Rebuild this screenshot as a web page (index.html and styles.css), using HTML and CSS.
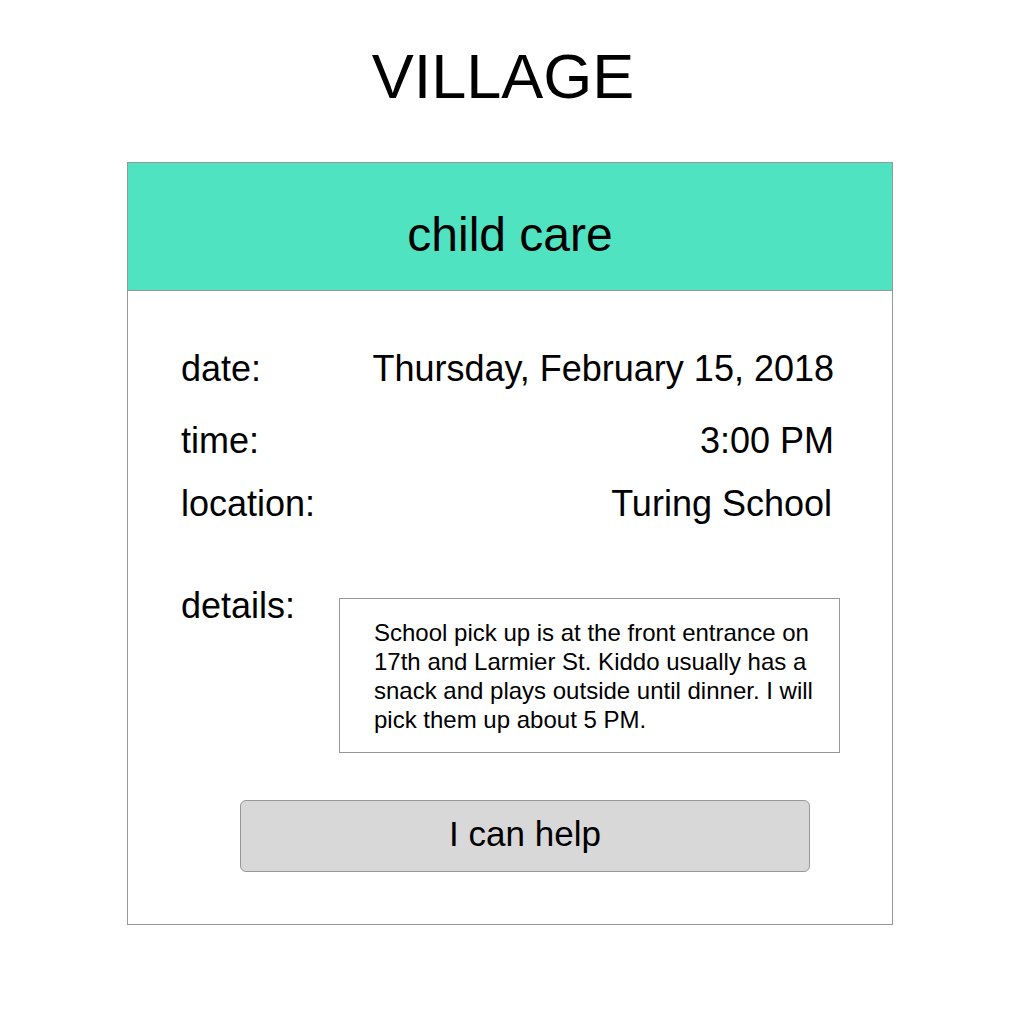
FILE: index.html
```html
<!DOCTYPE html>
<html lang="en">
<head>
<meta charset="utf-8">
<title>Village</title>
<link rel="stylesheet" href="styles.css">
</head>
<body>
  <header class="site-header">
    <h1 class="site-title">VILLAGE</h1>
  </header>
  <main class="card">
    <div class="card-head">
      <h2 class="card-title">child care</h2>
    </div>
    <div class="card-body">
      <div class="row row-date">
        <span class="label">date:</span>
        <span class="value">Thursday, February 15, 2018</span>
      </div>
      <div class="row row-time">
        <span class="label">time:</span>
        <span class="value">3:00 PM</span>
      </div>
      <div class="row row-location">
        <span class="label">location:</span>
        <span class="value value-location">Turing School</span>
      </div>
      <div class="details-row">
        <span class="label details-label">details:</span>
        <div class="details-box">School pick up is at the front entrance on 17th and Larmier St. Kiddo usually has a snack and plays outside until dinner. I will pick them up about 5 PM.</div>
      </div>
      <button class="help-btn" type="button">I can help</button>
    </div>
  </main>
</body>
</html>
```

FILE: styles.css
```css
* {
  box-sizing: border-box;
}

html, body {
  margin: 0;
  padding: 0;
  background: #ffffff;
}

body {
  font-family: "Liberation Sans", Arial, Helvetica, sans-serif;
  color: #000000;
  width: 1024px;
  height: 1024px;
  overflow: hidden;
}

.site-header {
  padding-top: 45px;
  padding-right: 18px;
  display: flex;
  justify-content: center;
}

.site-title {
  margin: 0;
  font-size: 63px;
  line-height: 63px;
  font-weight: normal;
}

.card {
  margin: 54px 0 0 127px;
  width: 766px;
  height: 763px;
  border: 1px solid #979797;
  display: flex;
  flex-direction: column;
}

.card-head {
  height: 128px;
  background: #50e3c2;
  border-bottom: 1px solid #979797;
  display: flex;
  align-items: center;
  justify-content: center;
  padding-top: 17px;
}

.card-title {
  margin: 0;
  font-size: 48px;
  line-height: 54px;
  font-weight: normal;
}

.card-body {
  padding: 57px 58px 0 53px;
  display: flex;
  flex-direction: column;
}

.row {
  display: flex;
  justify-content: space-between;
  align-items: baseline;
  font-size: 36px;
  line-height: 42px;
}

.row-time {
  margin-top: 30px;
}

.row-location {
  margin-top: 21px;
}

.value-location {
  margin-right: 2px;
}

.details-row {
  margin-top: 60px;
  display: flex;
  align-items: flex-start;
}

.details-label {
  width: 158px;
  flex: none;
  font-size: 36px;
  line-height: 42px;
}

.details-box {
  margin-top: 13px;
  width: 501px;
  flex: none;
  border: 1px solid #979797;
  padding: 19px 20px 18px 34px;
  font-size: 24px;
  line-height: 29px;
}

.help-btn {
  margin: 47px 0 0 59px;
  width: 570px;
  height: 72px;
  border: 1px solid #979797;
  border-radius: 6px;
  background: #d8d8d8;
  font-family: "Liberation Sans", Arial, Helvetica, sans-serif;
  font-size: 35px;
  line-height: 40px;
  color: #000000;
  padding: 0 0 4px 0;
  display: flex;
  align-items: center;
  justify-content: center;
}
```
